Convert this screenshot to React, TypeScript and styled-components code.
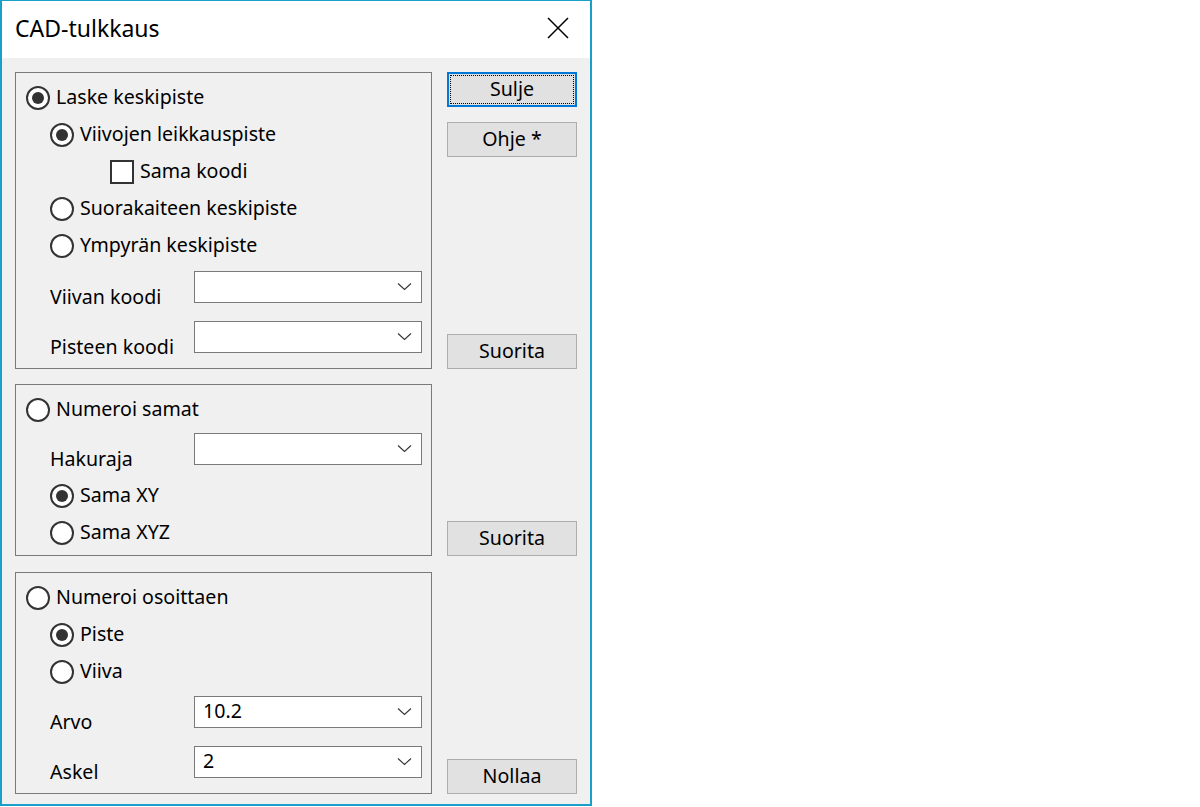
import React from "react";
import styled, { createGlobalStyle, css } from "styled-components";

const Global = createGlobalStyle`
  html, body { margin: 0; padding: 0; background: #ffffff; }
  body { font-family: "Noto Sans", "Open Sans", sans-serif; color: #000; }
  * { box-sizing: border-box; }
`;

const Dialog = styled.div`
  width: 592px;
  height: 806px;
  border: 2px solid #1a9fc9;
  border-top-width: 1px;
  background: #f0f0f0;
  display: flex;
  flex-direction: column;
`;

const TitleBar = styled.div`
  height: 57px;
  background: #ffffff;
  display: flex;
  align-items: center;
  justify-content: space-between;
  padding: 0 21px 0 13px;
`;

const Title = styled.div`
  font-size: 23px;
  line-height: 28px;
  margin-top: -4px;
`;

const CloseIcon = styled.svg`
  width: 22px;
  height: 22px;
  margin-top: -3px;
`;

const Body = styled.div`
  flex: 1;
  padding: 14px 13px 10px 13px;
  display: flex;
  flex-direction: column;
  gap: 15px;
`;

const Section = styled.div<{ $mt?: number }>`
  display: grid;
  grid-template-columns: 417px 130px;
  column-gap: 15px;
  margin-top: ${(p) => p.$mt ?? 0}px;
`;

const Group = styled.div`
  border: 1px solid #7a7a7a;
  padding: 6px 10px 0 0;
  display: flex;
  flex-direction: column;
`;

const GroupEnd = styled.div<{ $h: number }>`
  height: ${(p) => p.$h}px;
`;

const ButtonColumn = styled.div`
  display: flex;
  flex-direction: column;
  gap: 15px;
`;

const Spacer = styled.div`
  flex: 1;
`;

const Button = styled.div<{ $focused?: boolean }>`
  position: relative;
  height: 35px;
  background: #e1e1e1;
  border: 1px solid #adadad;
  display: flex;
  align-items: center;
  justify-content: center;
  font-size: 19.6px;
  line-height: 24px;
  padding-bottom: 1px;
  ${(p) =>
    p.$focused &&
    css`
      border: 2px solid #0078d7;
      &::after {
        content: "";
        position: absolute;
        inset: 1px;
        border: 1px dotted #000;
      }
    `}
`;

const levelPad = [10, 34, 94];

const OptionRow = styled.div<{ $level: number; $mt?: number }>`
  height: 37px;
  display: flex;
  align-items: center;
  gap: 6px;
  padding-left: ${(p) => levelPad[p.$level]}px;
  margin-top: ${(p) => p.$mt ?? 0}px;
  font-size: 19.6px;
  line-height: 24px;
`;

const RadioCircle = styled.span<{ $checked?: boolean }>`
  width: 24px;
  height: 24px;
  border-radius: 50%;
  border: 2px solid #333333;
  background: #ffffff;
  display: flex;
  align-items: center;
  justify-content: center;
  flex-shrink: 0;
  &::before {
    content: "";
    width: 12px;
    height: 12px;
    border-radius: 50%;
    background: ${(p) => (p.$checked ? "#333333" : "transparent")};
  }
`;

const CheckBox = styled.span`
  width: 24px;
  height: 24px;
  border: 2px solid #333333;
  background: #ffffff;
  flex-shrink: 0;
`;

const Label = styled.span`
  margin-top: -1px;
`;

const ComboRow = styled.div<{ $mt: number }>`
  display: grid;
  grid-template-columns: 144px 228px;
  padding-left: 34px;
  margin-top: ${(p) => p.$mt}px;
  height: 32px;
`;

const ComboLabel = styled.div`
  align-self: end;
  font-size: 19.6px;
  line-height: 24px;
  margin-bottom: -6px;
`;

const Combo = styled.div`
  height: 32px;
  background: #ffffff;
  border: 1px solid #7a7a7a;
  display: flex;
  align-items: center;
  justify-content: space-between;
  padding: 0 9px 0 8px;
  font-size: 19.6px;
  line-height: 24px;
`;

const ComboValue = styled.span`
  margin-top: -2px;
`;

const Chevron = styled.svg`
  width: 15px;
  height: 9px;
  margin-top: -2px;
`;

function Radio({ level, checked, label, mt }: { level: number; checked?: boolean; label: string; mt?: number }) {
  return (
    <OptionRow $level={level} $mt={mt}>
      <RadioCircle $checked={checked} />
      <Label>{label}</Label>
    </OptionRow>
  );
}

function Check({ level, label }: { level: number; label: string }) {
  return (
    <OptionRow $level={level}>
      <CheckBox />
      <Label>{label}</Label>
    </OptionRow>
  );
}

function ComboField({ label, value, mt }: { label: string; value?: string; mt: number }) {
  return (
    <ComboRow $mt={mt}>
      <ComboLabel>{label}</ComboLabel>
      <Combo>
        <ComboValue>{value ?? ""}</ComboValue>
        <Chevron viewBox="0 0 15 9">
          <path d="M1 1.5 L7.5 7.5 L14 1.5" fill="none" stroke="#333" strokeWidth="1.1" />
        </Chevron>
      </Combo>
    </ComboRow>
  );
}

export default function App() {
  return (
    <>
      <Global />
      <Dialog>
        <TitleBar>
          <Title>CAD-tulkkaus</Title>
          <CloseIcon viewBox="0 0 22 22">
            <path d="M1 1 L21 21 M21 1 L1 21" stroke="#000" strokeWidth="1.5" fill="none" />
          </CloseIcon>
        </TitleBar>
        <Body>
          <Section>
            <Group>
              <Radio level={0} checked label="Laske keskipiste" />
              <Radio level={1} checked label="Viivojen leikkauspiste" />
              <Check level={2} label="Sama koodi" />
              <Radio level={1} label="Suorakaiteen keskipiste" />
              <Radio level={1} label="Ympyrän keskipiste" />
              <ComboField label="Viivan koodi" mt={7} />
              <ComboField label="Pisteen koodi" mt={18} />
              <GroupEnd $h={15} />
            </Group>
            <ButtonColumn>
              <Button $focused>Sulje</Button>
              <Button>Ohje *</Button>
              <Spacer />
              <Button>Suorita</Button>
            </ButtonColumn>
          </Section>
          <Section>
            <Group>
              <Radio level={0} label="Numeroi samat" />
              <ComboField label="Hakuraja" mt={5} />
              <Radio level={1} checked label="Sama XY" mt={12} />
              <Radio level={1} label="Sama XYZ" />
              <GroupEnd $h={4} />
            </Group>
            <ButtonColumn>
              <Spacer />
              <Button>Suorita</Button>
            </ButtonColumn>
          </Section>
          <Section $mt={1}>
            <Group>
              <Radio level={0} label="Numeroi osoittaen" />
              <Radio level={1} checked label="Piste" />
              <Radio level={1} label="Viiva" />
              <ComboField label="Arvo" value="10.2" mt={6} />
              <ComboField label="Askel" value="2" mt={18} />
              <GroupEnd $h={15} />
            </Group>
            <ButtonColumn>
              <Spacer />
              <Button>Nollaa</Button>
            </ButtonColumn>
          </Section>
        </Body>
      </Dialog>
    </>
  );
}
